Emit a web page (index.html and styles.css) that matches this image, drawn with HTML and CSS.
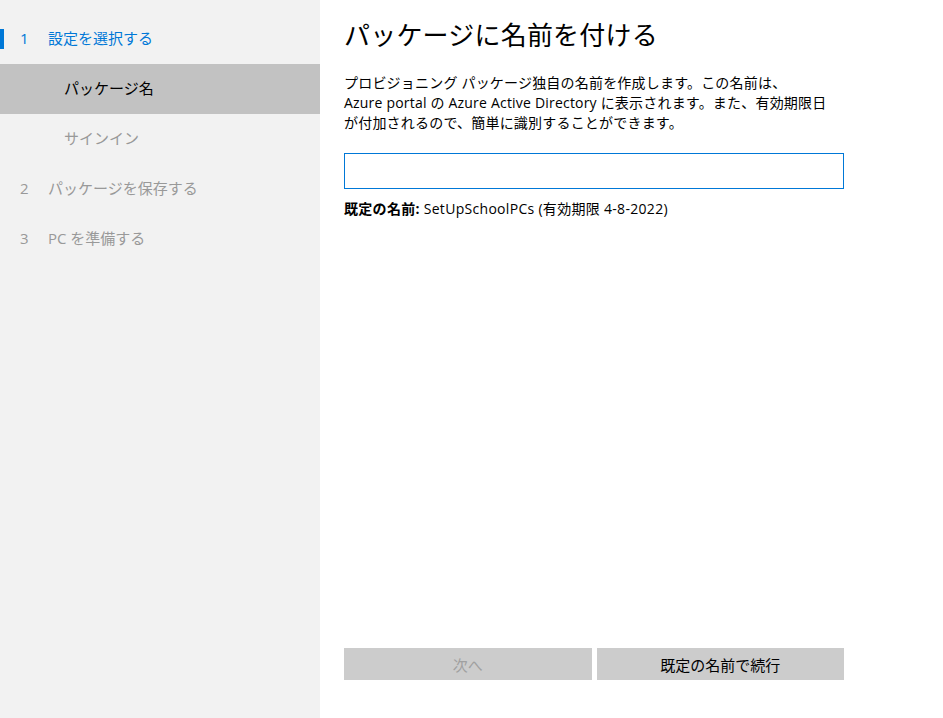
FILE: index.html
```html
<!DOCTYPE html>
<html lang="ja">
<head>
<meta charset="utf-8">
<link rel="stylesheet" href="styles.css">
</head>
<body>
<div class="app">
  <nav class="sidebar">
    <div class="step active"><span class="num">1</span><span class="label">設定を選択する</span></div>
    <div class="sub selected">パッケージ名</div>
    <div class="sub">サインイン</div>
    <div class="step"><span class="num">2</span><span class="label">パッケージを保存する</span></div>
    <div class="step"><span class="num">3</span><span class="label">PC を準備する</span></div>
  </nav>
  <main class="main">
    <h1 class="title">パッケージに名前を付ける</h1>
    <p class="desc">プロビジョニング パッケージ独自の名前を作成します。この名前は、<br>Azure portal の Azure Active Directory に表示されます。また、有効期限日<br>が付加されるので、簡単に識別することができます。</p>
    <input class="name-input" type="text">
    <p class="default"><b>既定の名前:</b> SetUpSchoolPCs (有効期限 4-8-2022)</p>
    <div class="buttons">
      <button class="btn disabled">次へ</button>
      <button class="btn">既定の名前で続行</button>
    </div>
  </main>
</div>
</body>
</html>
```

FILE: styles.css
```css
html, body {
  margin: 0;
  padding: 0;
  background: #ffffff;
}
body {
  font-family: "Open Sans", "Noto Sans", "Noto Sans CJK JP", sans-serif;
  color: #000;
}
.app {
  display: flex;
  width: 943px;
  height: 718px;
}
.sidebar {
  width: 320px;
  flex: none;
  background: #f2f2f2;
  padding-top: 14px;
  box-sizing: border-box;
}
.step, .sub {
  height: 50px;
  box-sizing: border-box;
  padding-bottom: 3px;
  display: flex;
  align-items: center;
  font-size: 15px;
  line-height: 20px;
  color: #999999;
  position: relative;
}
.step .num {
  width: 28px;
  padding-left: 20px;
}
.step.active {
  color: #0078d7;
}
.step.active::before {
  content: "";
  position: absolute;
  left: 0;
  top: 15px;
  width: 4px;
  height: 20px;
  background: #0078d7;
}
.sub {
  padding-left: 64px;
}
.sub.selected {
  background: #c2c2c2;
  color: #000;
}
.main {
  flex: 1;
  display: flex;
  flex-direction: column;
  padding: 17px 0 38px 24px;
  box-sizing: border-box;
}
.title {
  margin: 0;
  font-size: 26px;
  font-weight: normal;
  line-height: 36px;
  letter-spacing: 0.2px;
}
.desc {
  margin: 20px 0 0;
  width: 500px;
  font-size: 14px;
  line-height: 20px;
  letter-spacing: 0.2px;
  white-space: nowrap;
}
.name-input {
  margin: 20px 0 0;
  width: 500px;
  height: 36px;
  box-sizing: border-box;
  border: 1px solid #0078d7;
  outline: none;
  padding: 0 8px;
  font: inherit;
}
.default {
  margin: 10px 0 0;
  font-size: 14px;
  line-height: 20px;
  letter-spacing: 0.3px;
}
.buttons {
  margin-top: auto;
  display: flex;
  gap: 5px;
  width: 500px;
}
.btn {
  flex: 1;
  height: 32px;
  border: none;
  background: #cccccc;
  font-family: inherit;
  font-size: 15px;
  color: #000;
  padding: 0;
}
.btn.disabled {
  color: #a0a0a0;
}
```
